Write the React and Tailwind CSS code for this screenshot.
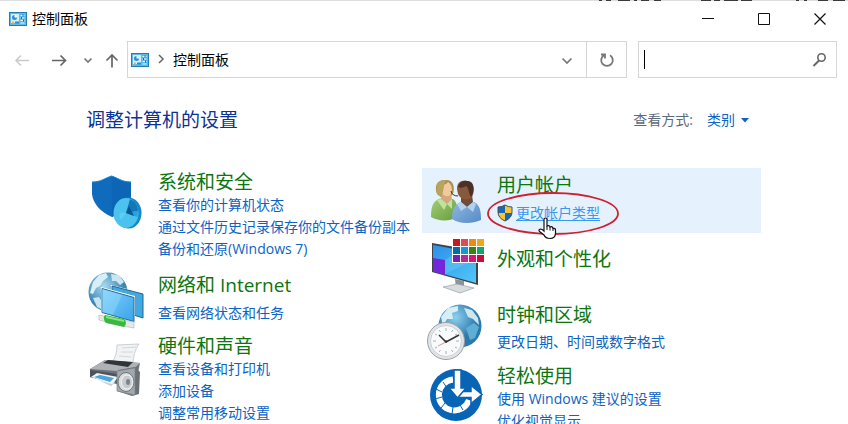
const PanelIcon = () => (
    <svg className="w-[18px] h-4 shrink-0" viewBox="0 0 18 16">
        <rect x="0.5" y="1.5" width="17" height="13" fill="#5fb8e8" stroke="#1f7fb4" />
        <rect x="2" y="3" width="8" height="9" fill="#d3effc" />
        <circle cx="5.5" cy="6.5" r="2.5" fill="#2b8ed0" />
        <path d="M5.5 6.5V3.8a2.7 2.7 0 0 1 2.7 2.7z" fill="#fff" />
        <rect x="3" y="10.5" width="2" height="2" fill="#f0b43c" />
        <rect x="6" y="10.5" width="4" height="2" fill="#2b8ed0" />
        <path d="M11.5 4.5h4M11.5 7h4M11.5 9.5h4M11.5 12h4" stroke="#e8f8ff" />
        <path d="M14 3.5v2M12.5 6v2M14.5 8.5v2" stroke="#186ca4" />
    </svg>
);

const SecurityIcon = () => (
    <svg className="w-14 h-14 overflow-visible" viewBox="0 0 56 56">
        <path d="M2 14C11 14 15 10 21.500 8C28 10 32 14 41 14V27C41 38 32 45 22 49C11 44 3 36 2 26Z" fill="#0f6cbd" />
        <path d="M21.500 8C28 10 32 14 41 14V27C41 38 32 45 22 49Z" fill="#0c66b5" />
        <path d="M2 14C11 14 15 10 21.500 8C28 10 32 14 41 14" fill="none" stroke="#1f88d8" />
        <ellipse cx="38.500" cy="45" rx="13" ry="15.500" fill="#1588cb" />
        <ellipse cx="36" cy="45" rx="12.500" ry="15" fill="#4cc3ee" />
        <path d="M36 45L31 52C28 48 29 43 36 45Z" fill="#5dcef4" />
        <path d="M36 45L40 31C45 33 48 38 48 43Z" fill="#1477ba" />
        <path d="M36 45L48 43L47.500 49Z" fill="#29a1db" />
        <path d="M36 45L39 38L44 48Z" fill="#095894" />
    </svg>
);

const NetworkIcon = () => (
    <svg className="w-14 h-14 overflow-visible" viewBox="0 0 56 56">
        <defs>
            <radialGradient id="netGlobe" cx="40%" cy="35%">
                <stop offset="0" stopColor="#a8d9f0" />
                <stop offset="1" stopColor="#3c86b4" />
            </radialGradient>
            <linearGradient id="netScreen" x1="0" y1="0" x2="1" y2="1">
                <stop offset="0" stopColor="#83d3fb" />
                <stop offset="1" stopColor="#38a3ea" />
            </linearGradient>
        </defs>
        <circle cx="18" cy="23" r="19.500" fill="url(#netGlobe)" />
        <path d="M3 13L9 6L16 4L18 8L13 12L10 17L6 19L3 25L0 24Z" fill="#d8eff8" />
        <path d="M21 5L29 6L34 13L30 16L26 12L22 12Z" fill="#cbe6f2" />
        <path d="M3 29L9 28L13 34L11 40L7 38Z" fill="#c4e4f1" />
        <path d="M21 16L54 24V51L21 40Z" fill="#fff" />
        <path d="M22 17L53 25V49L22 39Z" fill="#42a8e2" stroke="#21658f" />
        <path d="M11 18L45 27V54L11 45Z" fill="#fff" />
        <path d="M12 19.500L44 28.500V52.500L12 43.500Z" fill="url(#netScreen)" stroke="#246b97" />
        <path d="M12 20L32 26L23 46L12 43Z" fill="#a5e1fc" opacity=".35" />
        <path d="M9 46L17 48V53L9 51Z" fill="#e6e9e9" stroke="#a8b1b1" strokeWidth=".6" />
        <path d="M33 51L44 53V59L33 57Z" fill="#e6e9e9" stroke="#a8b1b1" strokeWidth=".6" />
        <path d="M15 46L34 50Q38 54 34 58L16 54Q12 49 15 46Z" fill="#39b83f" />
        <path d="M16 47L34 51V53L16 49Z" fill="#8be581" />
    </svg>
);

const HardwareIcon = () => (
    <svg className="w-14 h-14 overflow-visible" viewBox="0 0 56 56">
        <path d="M27 11L49 10Q43 18 43 31L22 28Q27 22 27 11Z" fill="#f1f3f4" stroke="#b8bec2" strokeWidth=".7" />
        <path d="M32 14L46 13M31 18L43 18M29 22L41 23" stroke="#d3d7d9" />
        <path d="M0 35L15 26L50 29L46 48L30 51L0 43Z" fill="#6e7378" />
        <path d="M0 35L15 26L50 29L40 38Z" fill="#aeb2b6" />
        <path d="M13 29L18 26L43 28L38 33Z" fill="#30353a" />
        <path d="M0 36L34 41L31 50L0 43Z" fill="#4d5358" />
        <path d="M1 43L7 39L28 43L23 50Z" fill="#edf3f6" />
        <path d="M4 43L10 41L24 44L20 48Z" fill="#4aa7d8" />
        <path d="M8 46L22 50L27 47L21 52Z" fill="#c6ced2" />
        <path d="M28 36L45 33L50 38L49 60L42 62L27 57Z" fill="#697076" />
        <path d="M27 37L45 34L45 61L27 57Z" fill="#a1a8ae" stroke="#7b8288" strokeWidth=".7" />
        <ellipse cx="36" cy="48" rx="8" ry="9.500" fill="#d9dddf" stroke="#6f767b" />
        <ellipse cx="37" cy="48" rx="5.500" ry="7" fill="#c5cacf" stroke="#f3f4f5" />
        <ellipse cx="38" cy="48" rx="2" ry="3" fill="#7b8489" />
    </svg>
);

const UsersIcon = () => (
    <svg className="w-14 h-14 overflow-visible" viewBox="0 0 56 56">
        <defs>
            <linearGradient id="greenShirt" x1="0" y1="0" x2="1" y2="1">
                <stop offset="0" stopColor="#a3d078" />
                <stop offset="1" stopColor="#679b3d" />
            </linearGradient>
            <linearGradient id="blueShirt" x1="0" y1="0" x2="1" y2="1">
                <stop offset="0" stopColor="#8fb9e4" />
                <stop offset="1" stopColor="#568bc4" />
            </linearGradient>
        </defs>
        <path d="M8 26C5 18 8 11 17 12C25 12 26 20 24 26C20 32 13 31 8 26Z" fill="#a6924d" />
        <path d="M2 49C2 36 5 32 13 30L24 31C28 34 29 40 29 49C20 54 9 53 2 49Z" fill="url(#greenShirt)" />
        <path d="M13 25H22L23 32L18 36L12 31Z" fill="#d8a67b" />
        <path d="M12 17C15 17 18 16 19 14C24 17 24 25 20 28C15 29 11 25 12 17Z" fill="#f0c9a0" />
        <path d="M8 26C6 17 9 12 17 12C14 18 15 24 12 29Z" fill="#b9a45d" />
        <path d="M12 31L18 36L15 42L8 32ZM23 31L18 36L23 41Z" fill="#c3e2a0" />
        <path d="M23 51C23 40 26 36 34 33L45 34C51 37 52 43 52 52C43 56 30 56 23 51Z" fill="url(#blueShirt)" />
        <path d="M32 27H43L44 34L38 39L32 34Z" fill="#704a35" />
        <path d="M28 21C28 14 32 12 38 13C46 13 46 24 43 29C39 34 31 31 29 26Z" fill="#87583b" />
        <path d="M29 19C31 12 38 11 43 15C46 20 44 26 42 29C39 24 40 20 37 18C34 20 31 20 29 19Z" fill="#4b3025" />
        <path d="M22 23Q23 28 29 28" fill="none" stroke="#30363b" />
        <path d="M32 34L38 39L32 43L28 36ZM44 34L38 39L44 44L47 36Z" fill="#b2d1ef" />
    </svg>
);

const palette = ["#c51925", "#df4c55", "#ee8a14", "#e9a91c", "#0868a8", "#1598d4", "#3d820f", "#13a476", "#7421ad", "#b52c96", "#d71577", "#c40f37"];

const AppearanceIcon = () => (
    <svg className="w-14 h-14 overflow-visible" viewBox="0 0 56 56">
        <defs>
            <linearGradient id="desktop" x1="0" y1="0" x2="1" y2="1">
                <stop offset="0" stopColor="#2e8fe9" />
                <stop offset="1" stopColor="#50c8f8" />
            </linearGradient>
        </defs>
        <path d="M26 41L35 43V50H27Z" fill="#8b9398" />
        <path d="M14 49L28 46L45 50L31 55Z" fill="#d7dcde" stroke="#9aa2a7" strokeWidth=".7" />
        <path d="M3 5L49 13V47L3 34Z" fill="#3b454d" />
        <path d="M4 7L47 15V45L4 33Z" fill="url(#desktop)" />
        <path d="M4 20L16 22V37L4 33Z" fill="#7526da" />
        <path d="M16 22L31 13L47 15V21L16 36Z" fill="#65c9fa" opacity=".5" />
        <rect x="23" width="33" height="25" fill="#fff" />
        {palette.map((c, i) => (
            <rect key={c} x={24 + (i % 4) * 8} y={1 + Math.floor(i / 4) * 8} width="7" height="7" fill={c} />
        ))}
    </svg>
);

const ClockIcon = () => (
    <svg className="w-14 h-14 overflow-visible" viewBox="0 0 56 56">
        <defs>
            <radialGradient id="earth" cx="40%" cy="30%">
                <stop offset="0" stopColor="#8bd0ee" />
                <stop offset="1" stopColor="#2b79ad" />
            </radialGradient>
        </defs>
        <circle cx="31" cy="23" r="21.500" fill="url(#earth)" />
        <path d="M12 14L19 5L29 3L29 8L23 10L24 16L18 16L14 23Z" fill="#d8eef6" />
        <path d="M35 5L43 7L49 15L50 22L44 16L39 14Z" fill="#cde7f1" />
        <path d="M37 25L45 20L50 24L46 35L41 37Z" fill="#5eafd3" />
        <circle cx="17" cy="38" r="18.500" fill="#e1e4e7" stroke="#98a1a8" />
        <circle cx="17" cy="38" r="15.500" fill="#f9fafb" stroke="#cbd0d4" />
        <path d="M17 25V28M17 48V51M4 38H7M27 38H30M10 27L11.500 29M24 27L22.500 29M6 31L8 32M28 31L26 32M6 45L8 44M28 45L26 44M10 49L11.500 47M24 49L22.500 47" stroke="#999" strokeWidth=".8" />
        <path d="M10 32L17 39L30 32" fill="none" stroke="#333" strokeWidth="1.500" />
        <path d="M17 39L9 43" stroke="#d56a65" strokeWidth=".7" />
        <circle cx="17" cy="38.500" r="1.200" fill="#333" />
    </svg>
);

const EaseIcon = () => (
    <svg className="w-14 h-14 overflow-visible" viewBox="0 0 56 56">
        <circle cx="27" cy="31" r="26" fill="#0864b5" />
        <path d="M24 15.500A15.500 15.500 0 1 0 40 36" fill="none" stroke="#fff" strokeWidth="6" />
        <path d="M14 18L18 24M7 25L13 28M6 35L13 33M12 44L16 39M23 50L24 43M34 46L31 41" stroke="#0864b5" strokeWidth="1" />
        <path d="M28 27.500H42V21.500L53 30.500L42 39.500V33.500H28Z" fill="#fff" stroke="#0864b5" strokeWidth="1.500" />
        <path d="M25 6H32V24H37L28.500 34L20 24H25Z" fill="#fff" stroke="#0864b5" strokeWidth="1.500" />
    </svg>
);

const ShieldIcon = () => (
    <svg className="w-4 h-[18px] shrink-0" viewBox="0 0 16 18">
        <path d="M8 1Q11 3 15 3V8Q15 14 8 17Q1 14 1 8V3Q5 3 8 1Z" fill="#1769b8" />
        <path d="M8 1V9H15V3Q11 3 8 1ZM8 9H1Q2 14 8 17Z" fill="#f8c431" />
        <path d="M8 1V9H1V3Q5 3 8 1ZM8 9H15Q14 14 8 17Z" fill="#1769b8" />
        <path d="M8 1Q11 3 15 3V8Q15 14 8 17Q1 14 1 8V3Q5 3 8 1Z" fill="none" stroke="#44525d" />
    </svg>
);

const Category = ({ icon, title, links = [], className = "", textClass = "", linksClass = "" }) => (
    <section className={`flex gap-3 pl-[7px] ${className}`}>
        <div className="w-14 shrink-0">{icon}</div>
        <div className={`whitespace-nowrap ${textClass}`}>
            <h2 className="text-[19px] leading-6 text-[#0b750f]"><a href="#">{title}</a></h2>
            <ul className={linksClass}>
                {links.map((link) => (
                    <li key={link} className="text-sm leading-[22px] text-[#0b63c5]"><a href="#">{link}</a></li>
                ))}
            </ul>
        </div>
    </section>
);

const App = () => {
    return (
        <div className="h-screen overflow-hidden bg-white text-black font-['Open_Sans','Noto_Sans_CJK_SC',sans-serif]">
            <header className="relative flex items-stretch justify-between h-9 border-t border-[#dedede]">
                <svg className="absolute -top-px right-0 w-[252px] h-0.5" viewBox="0 0 252 2">
                    <path d="M3 .5h3M10 .5h5M22 .5h12M38 .5h3M45 .5h8M58 .5h7M105 .5h10M118 .5h6M128 .5h14M145 .5h11M200 .5h3M208 .5h3M222 .5h10M237 .5h12" stroke="#3a3a3a" />
                </svg>
                <div className="flex items-center gap-[5px] pl-[9px]">
                    <PanelIcon />
                    <h1 className="text-sm">控制面板</h1>
                </div>
                <div className="flex">
                    <button aria-label="最小化" className="w-14 flex items-center justify-center">
                        <svg className="w-3 h-3" viewBox="0 0 12 12"><path d="M0 5.500h12" stroke="#111" /></svg>
                    </button>
                    <button aria-label="最大化" className="w-14 flex items-center justify-center">
                        <svg className="w-3 h-3" viewBox="0 0 12 12"><path d="M.5.5h11v11H.5z" fill="none" stroke="#111" /></svg>
                    </button>
                    <button aria-label="关闭" className="w-14 flex items-center justify-center">
                        <svg className="w-3 h-3" viewBox="0 0 12 12"><path d="M.5.5l11 11M11.500.5l-11 11" stroke="#111" strokeWidth="1.200" /></svg>
                    </button>
                </div>
            </header>

            <nav className="flex items-center pt-[5px] pl-[14px] pr-[11px]">
                <button aria-label="后退" className="mr-[21px]">
                    <svg className="block w-4 h-4" viewBox="0 0 16 16"><path d="M15 8.500H2M7 3.500L2 8.500l5 5" fill="none" stroke="#c9c9c9" strokeWidth="1.500" /></svg>
                </button>
                <button aria-label="前进" className="mr-4">
                    <svg className="block w-4 h-4" viewBox="0 0 16 16"><path d="M1 8.500h13M9.500 3.500l5 5-5 5" fill="none" stroke="#666" strokeWidth="1.700" /></svg>
                </button>
                <button aria-label="最近浏览的位置" className="mr-3">
                    <svg className="block w-2.5 h-4" viewBox="0 0 10 16"><path d="M1.500 6.500L5 10l3.500-3.500" fill="none" stroke="#777" strokeWidth="1.700" /></svg>
                </button>
                <button aria-label="向上" className="mr-2">
                    <svg className="block w-3.5 h-4" viewBox="0 0 14 16"><path d="M7 15.500V3M1.500 8.500L7 3l5.500 5.500" fill="none" stroke="#666" strokeWidth="1.700" /></svg>
                </button>
                <div className="flex flex-1 items-stretch h-[37px] border border-[#d6d6d6]">
                    <div className="flex flex-1 items-center pl-[3px]">
                        <PanelIcon />
                        <svg className="w-2 h-4 ml-2 mr-2" viewBox="0 0 8 16"><path d="M2 3l4 4-4 4" fill="none" stroke="#666" strokeWidth="1.500" /></svg>
                        <button className="text-sm">控制面板</button>
                    </div>
                    <button aria-label="以前的位置" className="flex w-10 items-center justify-center border-r border-[#d6d6d6]">
                        <svg className="w-3 h-4" viewBox="0 0 12 16"><path d="M1.500 6.500L6 11l4.500-4.500" fill="none" stroke="#777" strokeWidth="1.700" /></svg>
                    </button>
                    <button aria-label="刷新" className="flex w-[39px] items-center justify-center">
                        <svg className="w-4 h-4" viewBox="0 0 16 16"><path d="M11 3.200A5.800 5.800 0 1 1 5 3.200M2 2.500h4v4" fill="none" stroke="#777" strokeWidth="1.800" /></svg>
                    </button>
                </div>
                <div className="relative flex items-center w-[199px] h-[37px] ml-[11px] border border-[#d6d6d6]">
                    <input type="text" aria-label="搜索控制面板" className="flex-1 min-w-0 h-full px-1.5 text-sm outline-none caret-transparent" />
                    <span className="absolute left-[5px] top-2 w-px h-[19px] bg-black"></span>
                    <button aria-label="搜索" className="pr-2">
                        <svg className="block w-4 h-4" viewBox="0 0 16 16"><circle cx="9.500" cy="5.500" r="3.700" fill="none" stroke="#666" strokeWidth="1.600" /><path d="M7 8.500L1.500 14" stroke="#666" strokeWidth="2" /></svg>
                    </button>
                </div>
            </nav>

            <main className="pl-[83px] pr-[87px] pt-[30px]">
                <div className="flex items-center justify-between h-6 pl-[3px] pr-3 mb-9">
                    <h2 className="text-[19px] leading-6 text-[#0b3394]">调整计算机的设置</h2>
                    <div className="flex items-center text-sm">
                        <label htmlFor="view" className="text-[#5c6b7a] mr-[14px]">查看方式:</label>
                        <div className="relative">
                            <select id="view" defaultValue="类别" className="block w-[42px] appearance-none bg-transparent text-[#0b63c5] outline-none">
                                <option>类别</option>
                                <option>大图标</option>
                                <option>小图标</option>
                            </select>
                            <svg className="absolute right-0 top-2 w-2 h-[5px] pointer-events-none" viewBox="0 0 8 5"><path d="M0 0h8L4 4.500z" fill="#0b63c5" /></svg>
                        </div>
                    </div>
                </div>

                <div className="grid grid-cols-2">
                    <div className="flex flex-col gap-[5px]">
                        <Category
                            icon={<SecurityIcon />}
                            title="系统和安全"
                            links={["查看你的计算机状态", "通过文件历史记录保存你的文件备份副本", "备份和还原(Windows 7)"]}
                            className="mb-1"
                            textClass="pt-[2px]"
                        />
                        <Category
                            icon={<NetworkIcon />}
                            title="网络和 Internet"
                            links={["查看网络状态和任务"]}
                            className="mb-1"
                            textClass="pt-1"
                            linksClass="mt-[5px]"
                        />
                        <Category icon={<HardwareIcon />} title="硬件和声音" links={["查看设备和打印机", "添加设备", "调整常用移动设置"]} />
                    </div>

                    <div className="flex flex-col gap-[5px]">
                        <section className="flex gap-3 h-[65px] pl-[7px] bg-[#e5f2fd]">
                            <div className="w-14 shrink-0"><UsersIcon /></div>
                            <div className="pt-[5px] whitespace-nowrap">
                                <h2 className="text-[19px] leading-6 text-[#0b750f]"><a href="#">用户帐户</a></h2>
                                <div className="relative mt-[5px] w-fit">
                                    <a href="#" className="flex items-center gap-[3px] text-sm leading-[22px] text-[#3997ee]">
                                        <ShieldIcon />
                                        <span className="underline underline-offset-2">更改帐户类型</span>
                                    </a>
                                    <svg className="absolute -left-2.5 -top-2.5 w-[132px] h-[43px] pointer-events-none" viewBox="0 0 132 43">
                                        <ellipse cx="66" cy="21.500" rx="65" ry="20.500" fill="none" stroke="#cf2030" strokeWidth="1.800" />
                                    </svg>
                                    <svg className="absolute left-10 top-3.5 w-5 h-6 pointer-events-none" viewBox="0 0 20 24">
                                        <path d="M7 15V3.500Q7 2 8.500 2T10 3.500V10Q12.500 9 13 11Q15.500 10 16 12.500Q18.500 12 18.500 14V17Q18.500 22.500 13 22.500Q8.500 22.500 7 19L2.500 15.500Q1 13.500 3.500 13Q5 13 7 15Z" fill="#fff" stroke="#111" strokeWidth="1.200" />
                                        <path d="M10 10v4M13 11v3.500M16 12.500V15" stroke="#111" />
                                    </svg>
                                </div>
                            </div>
                        </section>
                        <section className="flex gap-3 pl-[7px] mb-1">
                            <div className="w-14 shrink-0"><AppearanceIcon /></div>
                            <h2 className="pt-[9px] text-[19px] leading-6 text-[#0b750f]"><a href="#">外观和个性化</a></h2>
                        </section>
                        <Category icon={<ClockIcon />} title="时钟和区域" links={["更改日期、时间或数字格式"]} linksClass="mt-1" />
                        <Category icon={<EaseIcon />} title="轻松使用" links={["使用 Windows 建议的设置", "优化视觉显示"]} />
                    </div>
                </div>
            </main>
        </div>
    );
};

export default App;
